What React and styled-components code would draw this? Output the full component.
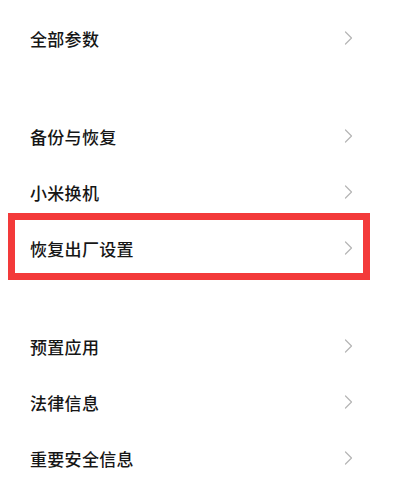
import React from "react";
import styled, { createGlobalStyle } from "styled-components";

const Global = createGlobalStyle`
  html, body { margin: 0; padding: 0; background: #ffffff; }
  body { font-family: "Noto Sans CJK SC", "Noto Sans", sans-serif; }
`;

const Page = styled.div`
  width: 402px;
  height: 484px;
  overflow: hidden;
  background: #fff;
  padding: 10px 50px 0 29px;
  box-sizing: border-box;
  display: flex;
  flex-direction: column;
`;

const Section = styled.div`
  display: flex;
  flex-direction: column;
  padding: ${(p) => p.$pad || "0"};
`;

const Divider = styled.div`
  height: 1px;
  background: #e6e6e6;
`;

const Row = styled.div`
  position: relative;
  height: 56px;
  display: flex;
  align-items: center;
  justify-content: space-between;
  padding-left: 1px;
  ${(p) =>
    p.$highlight &&
    `
    &::after {
      content: "";
      position: absolute;
      top: -7px;
      bottom: -4px;
      left: -21px;
      right: -18px;
      border: 7px solid #f33a3a;
      pointer-events: none;
    }
  `}
`;

const Label = styled.span`
  font-size: 17px;
  font-weight: 500;
  color: #161616;
  letter-spacing: 0.3px;
`;

const Chevron = () => (
  <svg width="9" height="14" viewBox="0 0 9 14" style={{ marginRight: -1 }}>
    <polyline
      points="1.5,1 7.5,7 1.5,13"
      fill="none"
      stroke="#b5b5b5"
      strokeWidth="1.2"
      strokeLinecap="round"
      strokeLinejoin="round"
    />
  </svg>
);

const Item = ({ label, highlight }) => (
  <Row $highlight={highlight}>
    <Label>{label}</Label>
    <Chevron />
  </Row>
);

export default function App() {
  return (
    <>
      <Global />
      <Page>
        <Section $pad="0 0 21px">
          <Item label="全部参数" />
        </Section>
        <Divider />
        <Section $pad="21px 0 20px">
          <Item label="备份与恢复" />
          <Item label="小米换机" />
          <Item label="恢复出厂设置" highlight />
        </Section>
        <Divider />
        <Section $pad="22px 0 0">
          <Item label="预置应用" />
          <Item label="法律信息" />
          <Item label="重要安全信息" />
        </Section>
      </Page>
    </>
  );
}
